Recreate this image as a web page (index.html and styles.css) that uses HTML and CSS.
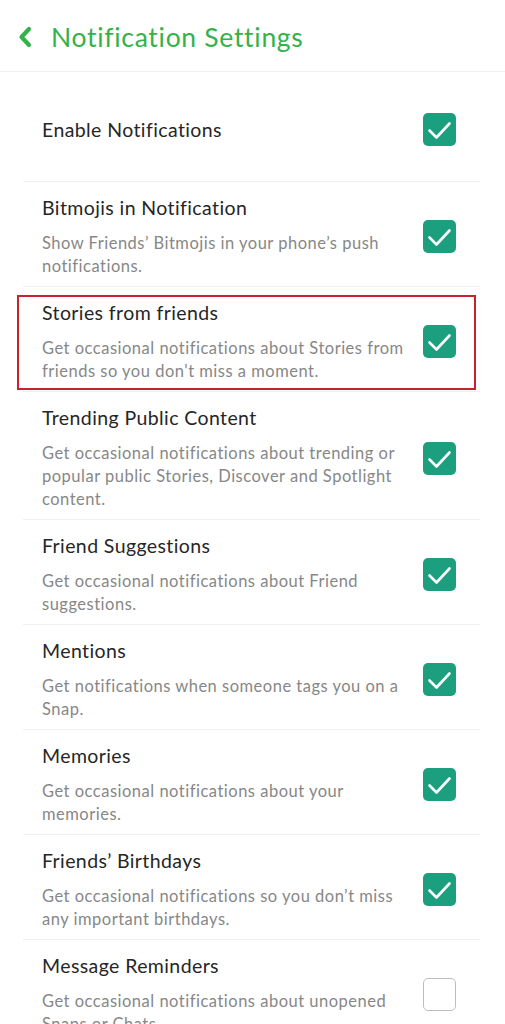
FILE: index.html
```html
<!DOCTYPE html>
<html lang="en">
<head>
<meta charset="utf-8">
<title>Notification Settings</title>
<link rel="stylesheet" href="styles.css">
</head>
<body>
<header class="topbar">
  <svg class="back" width="16" height="22" viewBox="0 0 16 22" aria-hidden="true">
    <polyline points="12,3 4.5,11 12,19" fill="none" stroke="#34b24a" stroke-width="4.2" stroke-linecap="round" stroke-linejoin="round"/>
  </svg>
  <h1 class="title">Notification Settings</h1>
</header>

<main class="list">
  <div class="row row-single">
    <div class="text"><div class="label">Enable Notifications</div></div>
    <span class="check on"><svg viewBox="0 0 33 33"><polyline points="6.5,17.5 13.5,24.5 26.5,10.5"/></svg></span>
  </div>

  <div class="row">
    <div class="text">
      <div class="label">Bitmojis in Notification</div>
      <div class="desc">Show Friends’ Bitmojis in your phone’s push notifications.</div>
    </div>
    <span class="check on"><svg viewBox="0 0 33 33"><polyline points="6.5,17.5 13.5,24.5 26.5,10.5"/></svg></span>
  </div>

  <div class="row highlight">
    <div class="text">
      <div class="label">Stories from friends</div>
      <div class="desc">Get occasional notifications about Stories from friends so you don't miss a moment.</div>
    </div>
    <span class="check on"><svg viewBox="0 0 33 33"><polyline points="6.5,17.5 13.5,24.5 26.5,10.5"/></svg></span>
  </div>

  <div class="row">
    <div class="text">
      <div class="label">Trending Public Content</div>
      <div class="desc">Get occasional notifications about trending or popular public Stories, Discover and Spotlight content.</div>
    </div>
    <span class="check on"><svg viewBox="0 0 33 33"><polyline points="6.5,17.5 13.5,24.5 26.5,10.5"/></svg></span>
  </div>

  <div class="row">
    <div class="text">
      <div class="label">Friend Suggestions</div>
      <div class="desc">Get occasional notifications about Friend suggestions.</div>
    </div>
    <span class="check on"><svg viewBox="0 0 33 33"><polyline points="6.5,17.5 13.5,24.5 26.5,10.5"/></svg></span>
  </div>

  <div class="row">
    <div class="text">
      <div class="label">Mentions</div>
      <div class="desc">Get notifications when someone tags you on a Snap.</div>
    </div>
    <span class="check on"><svg viewBox="0 0 33 33"><polyline points="6.5,17.5 13.5,24.5 26.5,10.5"/></svg></span>
  </div>

  <div class="row">
    <div class="text">
      <div class="label">Memories</div>
      <div class="desc">Get occasional notifications about your memories.</div>
    </div>
    <span class="check on"><svg viewBox="0 0 33 33"><polyline points="6.5,17.5 13.5,24.5 26.5,10.5"/></svg></span>
  </div>

  <div class="row">
    <div class="text">
      <div class="label">Friends’ Birthdays</div>
      <div class="desc">Get occasional notifications so you don’t miss any important birthdays.</div>
    </div>
    <span class="check on"><svg viewBox="0 0 33 33"><polyline points="6.5,17.5 13.5,24.5 26.5,10.5"/></svg></span>
  </div>

  <div class="row">
    <div class="text">
      <div class="label">Message Reminders</div>
      <div class="desc">Get occasional notifications about unopened Snaps or Chats.</div>
    </div>
    <span class="check off"></span>
  </div>
</main>
</body>
</html>
```

FILE: styles.css
```css
* { box-sizing: border-box; }

html, body {
  margin: 0;
  padding: 0;
  background: #ffffff;
}

body {
  font-family: "Lato", "Noto Sans", sans-serif;
  color: #262626;
  overflow: hidden;
}

.topbar {
  height: 72px;
  display: flex;
  align-items: center;
  padding: 2px 0 0 17px;
  border-bottom: 1px solid #f1f1f1;
}

.back {
  display: block;
  flex: none;
}

.title {
  margin: 0 0 0 18px;
  font-size: 26.5px;
  font-weight: 400;
  color: #34b24a;
  letter-spacing: 0.7px;
}

.list {
  padding: 0 25px 0 23px;
}

.row {
  position: relative;
  display: flex;
  align-items: center;
  padding: 13px 24px 8px 19px;
  border-bottom: 1px solid #f1f1f1;
}

.row-single {
  padding-top: 41px;
  padding-bottom: 35px;
}

.text {
  flex: 1;
  min-width: 0;
  padding-right: 12px;
}

.label {
  font-size: 19.5px;
  line-height: 26px;
  letter-spacing: 0.4px;
  color: #262626;
}

.desc {
  margin-top: 11px;
  font-size: 16.5px;
  line-height: 23px;
  letter-spacing: 0.5px;
  color: #878787;
}

.check {
  flex: none;
  width: 33px;
  height: 33px;
  border-radius: 5px;
  display: block;
}

.check.on {
  background: #1b9f7e;
}

.check.on svg {
  display: block;
  width: 33px;
  height: 33px;
  fill: none;
  stroke: #ffffff;
  stroke-width: 2.6;
  stroke-linecap: round;
  stroke-linejoin: round;
}

.check.off {
  border: 1.5px solid #bdbdbd;
  background: #ffffff;
}

.highlight::after {
  content: "";
  position: absolute;
  top: 8px;
  bottom: 1px;
  left: -6px;
  right: 4px;
  border: 2.5px solid #c8222e;
  pointer-events: none;
}
```
